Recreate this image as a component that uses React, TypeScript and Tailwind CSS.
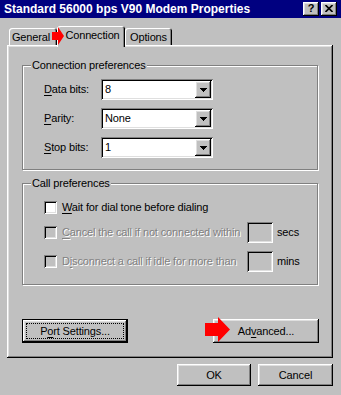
import React from "react";

const raised =
  "shadow-[inset_-1px_-1px_0_#000,inset_1px_1px_0_#fff,inset_-2px_-2px_0_#808080,inset_2px_2px_0_#dfdfdf]";
const sunken =
  "shadow-[inset_1px_1px_0_#808080,inset_-1px_-1px_0_#fff,inset_2px_2px_0_#000,inset_-2px_-2px_0_#dfdfdf]";
const disabledText = "text-[#808080] [text-shadow:1px_1px_0_#fff]";

function DownArrow() {
  return (
    <svg width="7" height="4" viewBox="0 0 7 4" shapeRendering="crispEdges">
      <path d="M0 0h7v1h-1v1h-1v1h-1v1h-1v-1h-1v-1h-1v-1h-1z" fill="#000" />
    </svg>
  );
}

function Combo({ value }: { value: string }) {
  return (
    <div className={`w-[112px] h-[21px] bg-white flex items-center p-[2px] ${sunken}`}>
      <span className="flex-1 pl-[2px] leading-none text-black">{value}</span>
      <div className={`w-[16px] h-[17px] bg-[#c0c0c0] flex items-center justify-center ${raised}`}>
        <DownArrow />
      </div>
    </div>
  );
}

function Checkbox({ disabled }: { disabled?: boolean }) {
  return (
    <div
      className={`w-[13px] h-[13px] shrink-0 ${disabled ? "bg-[#c0c0c0]" : "bg-white"} ${sunken}`}
    />
  );
}

function U({ children }: { children: React.ReactNode }) {
  return <span className="underline decoration-1 underline-offset-[2px]">{children}</span>;
}

function Group({
  label,
  className,
  children,
}: {
  label: string;
  className: string;
  children: React.ReactNode;
}) {
  return (
    <div
      className={`relative border border-[#808080] shadow-[inset_1px_1px_0_#fff,1px_1px_0_#fff] ${className}`}
    >
      <span className="absolute -top-[7px] left-[8px] px-[1px] bg-[#c0c0c0] leading-[13px] text-black">
        {label}
      </span>
      {children}
    </div>
  );
}

function RedArrowSmall() {
  return (
    <svg width="12" height="18" viewBox="0 0 12 18" className="absolute left-[-5px] top-[1px]">
      <polygon points="0,5 6,5 6,0 12,9 6,18 6,13 0,13" fill="#ff0000" />
    </svg>
  );
}

function RedArrowBig() {
  return (
    <svg width="25" height="25" viewBox="0 0 25 25" className="absolute left-[-8px] top-[-2px]">
      <polygon points="0,6 13,6 13,0 25,12.5 13,25 13,19 0,19" fill="#ff0000" />
    </svg>
  );
}

export default function App() {
  return (
    <div className="w-[341px] h-[395px] bg-[#c0c0c0] flex flex-col overflow-hidden font-['Liberation_Sans',Arial,sans-serif] text-[11px] tracking-[-0.15px] text-black select-none">
      {/* Title bar */}
      <div className="h-[18px] bg-[#000080] flex items-center justify-between pl-[4px] pr-[4px]">
        <span className="text-white font-bold text-[12px] leading-none tracking-normal">
          Standard 56000 bps V90 Modem Properties
        </span>
        <div className="flex gap-[2px]">
          <div
            className={`w-[16px] h-[14px] bg-[#c0c0c0] flex items-center justify-center font-bold text-[11px] leading-none pb-[1px] ${raised}`}
          >
            ?
          </div>
          <div className={`w-[16px] h-[14px] bg-[#c0c0c0] flex items-center justify-center pb-[1px] ${raised}`}>
            <svg width="8" height="7" viewBox="0 0 8 7">
              <path d="M0.5 0 L7.5 7 M7.5 0 L0.5 7" stroke="#000" strokeWidth="1.6" />
            </svg>
          </div>
        </div>
      </div>

      {/* Tabs */}
      <div className="h-[27px] flex items-end pl-[9px]">
        <div className="w-[48px] h-[17px] pt-[2px] pr-[4px] flex items-center justify-center rounded-t-[3px] shadow-[inset_1px_1px_0_#fff,inset_-1px_0_0_#000,inset_-2px_0_0_#808080]">
          General
        </div>
        <div className="relative z-10 w-[68px] h-[21px] mb-[-2px] pb-[3px] pl-[3px] bg-[#c0c0c0] flex items-center justify-center rounded-t-[3px] shadow-[inset_1px_1px_0_#fff,inset_-1px_0_0_#000,inset_-2px_0_0_#808080]">
          Connection
          <RedArrowSmall />
        </div>
        <div className="w-[47px] h-[17px] pt-[2px] flex items-center justify-center rounded-t-[3px] shadow-[inset_1px_1px_0_#fff,inset_-1px_0_0_#000,inset_-2px_0_0_#808080]">
          Options
        </div>
      </div>

      {/* Tab panel */}
      <div className={`ml-[7px] mr-[8px] h-[313px] flex flex-col pt-[20px] px-[15px] ${raised}`}>
        <Group label="Connection preferences" className="h-[105px] pt-[13px] pl-[21px]">
          <div className="flex flex-col gap-[8px]">
            <div className="flex items-center h-[21px]">
              <span className="w-[57px]">
                <U>D</U>ata bits:
              </span>
              <Combo value="8" />
            </div>
            <div className="flex items-center h-[21px]">
              <span className="w-[57px]">
                <U>P</U>arity:
              </span>
              <Combo value="None" />
            </div>
            <div className="flex items-center h-[21px]">
              <span className="w-[57px]">
                <U>S</U>top bits:
              </span>
              <Combo value="1" />
            </div>
          </div>
        </Group>

        <Group label="Call preferences" className="mt-[13px] h-[102px] pt-[17px] pl-[21px]">
          <div className="flex flex-col">
            <div className="flex items-center h-[13px]">
              <Checkbox />
              <span className="ml-[5px]">
                <U>W</U>ait for dial tone before dialing
              </span>
            </div>
            <div className="flex items-center h-[21px] mt-[8px]">
              <Checkbox disabled />
              <span className={`ml-[5px] w-[185px] whitespace-nowrap ${disabledText}`}>
                <U>C</U>ancel the call if not connected within
              </span>
              <div className={`w-[26px] h-[21px] shrink-0 bg-[#c0c0c0] ${sunken}`} />
              <span className="ml-[4px]">secs</span>
            </div>
            <div className="flex items-center h-[21px] mt-[8px]">
              <Checkbox disabled />
              <span className={`ml-[5px] w-[185px] whitespace-nowrap ${disabledText}`}>
                D<U>i</U>sconnect a call if idle for more than
              </span>
              <div className={`w-[26px] h-[21px] shrink-0 bg-[#c0c0c0] ${sunken}`} />
              <span className="ml-[4px]">mins</span>
            </div>
          </div>
        </Group>

        <div className="mt-[34px] flex justify-between -mr-[1px]">
          <div className="w-[106px] h-[24px] border border-black">
            <div className={`w-full h-full p-[3px] ${raised}`}>
              <div className="w-full h-full border border-dotted border-black flex items-center justify-center">
                P<U>o</U>rt Settings...
              </div>
            </div>
          </div>
          <div className="relative">
            <div className={`w-[106px] h-[24px] flex items-center justify-center ${raised}`}>
              Ad<U>v</U>anced...
            </div>
            <RedArrowBig />
          </div>
        </div>
      </div>

      {/* Bottom buttons */}
      <div className="pt-[6px] flex justify-end gap-[7px] pr-[8px]">
        <div className={`w-[74px] h-[22px] flex items-center justify-center ${raised}`}>OK</div>
        <div className={`w-[75px] h-[22px] flex items-center justify-center ${raised}`}>Cancel</div>
      </div>
    </div>
  );
}
